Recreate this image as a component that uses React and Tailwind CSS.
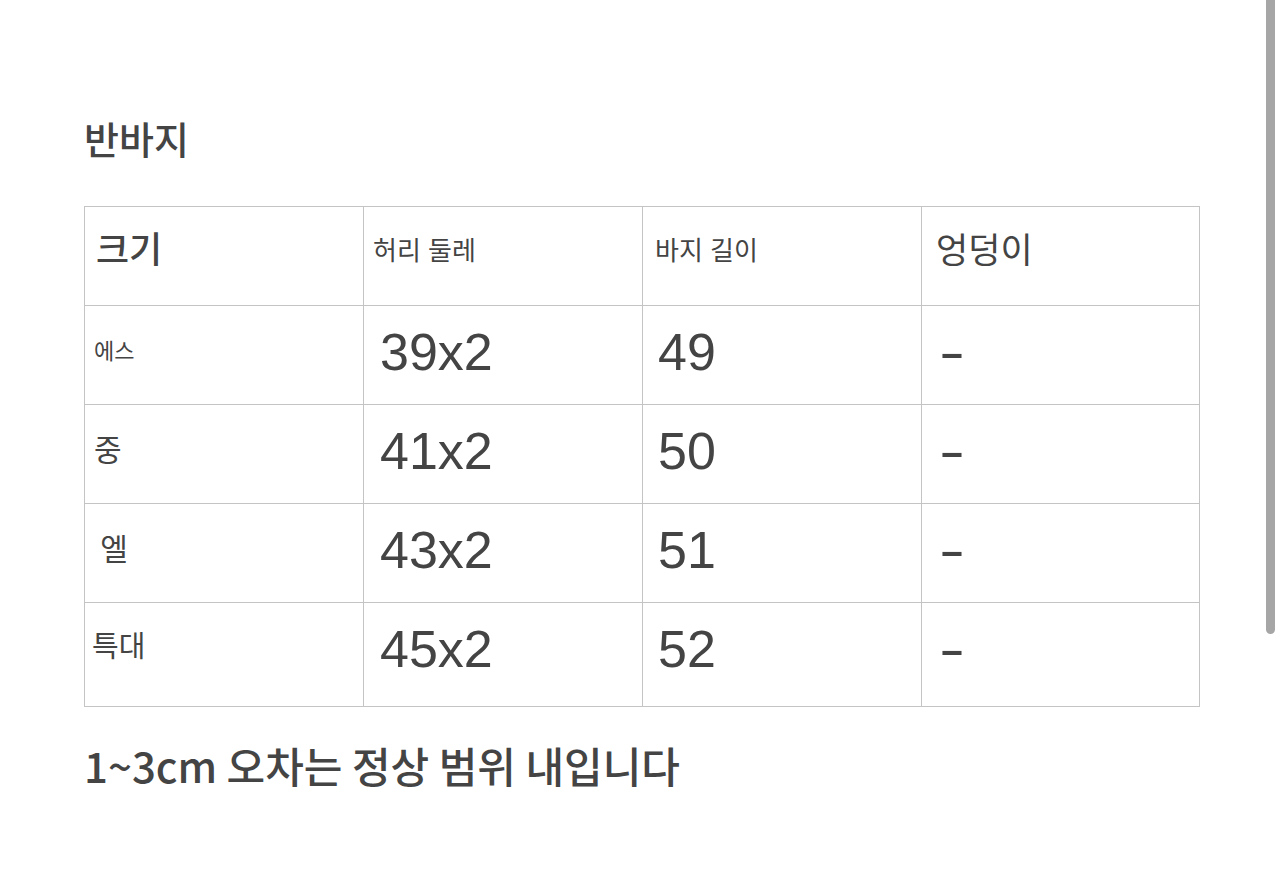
import React from "react";

const font = { fontFamily: '"Liberation Sans", "Noto Sans CJK KR", sans-serif' };
const krFont = { fontFamily: '"Noto Sans CJK KR", "Liberation Sans", sans-serif' };

const rows = [
  { label: "에스", labelCls: "text-[22px] pl-[9px]", w: "39x2", l: "49" },
  { label: "중", labelCls: "text-[30px] pl-[9px]", w: "41x2", l: "50" },
  { label: "\u00a0엘", labelCls: "text-[30px] pl-[7px]", w: "43x2", l: "51" },
  { label: "특대", labelCls: "text-[29px] pl-[7px]", w: "45x2", l: "52" },
];

export default function App() {
  return (
    <div className="relative min-h-[886px] bg-white text-[#444444]" style={font}>
      <div className="pl-[84px] pt-[112px] w-[1200px]">
        <h1 className="text-[38px] font-medium leading-[52px] m-0" style={krFont}>반바지</h1>
        <table className="mt-[42px] w-[1115px] table-fixed border-collapse border border-[#c4c4c4]">
          <colgroup>
            <col className="w-[279px]" />
            <col className="w-[279px]" />
            <col className="w-[279px]" />
            <col className="w-[278px]" />
          </colgroup>
          <tbody>
            <tr className="h-[99px]">
              <td className="border border-[#c4c4c4] pl-[11px] pb-[10px] align-middle text-[36px] font-medium">크기</td>
              <td className="border border-[#c4c4c4] pl-[9px] pb-[10px] align-middle text-[26px]">허리 둘레</td>
              <td className="border border-[#c4c4c4] pl-[12px] pb-[10px] align-middle text-[26px]">바지 길이</td>
              <td className="border border-[#c4c4c4] pl-[14px] pb-[10px] align-middle text-[35px]">엉덩이</td>
            </tr>
            {rows.map((r, i) => {
              const last = i === rows.length - 1;
              return (
                <tr key={i} className={last ? "h-[104px]" : "h-[99px]"}>
                  <td className={`border border-[#c4c4c4] align-middle ${r.labelCls} ${last ? "pb-[14px]" : "pb-[8px]"}`}>{r.label}</td>
                  <td className={`border border-[#c4c4c4] pl-[16px] align-middle text-[52px] ${last ? "pb-[12px]" : "pb-[6px]"}`}>{r.w}</td>
                  <td className={`border border-[#c4c4c4] pl-[15px] align-middle text-[52px] ${last ? "pb-[12px]" : "pb-[6px]"}`}>{r.l}</td>
                  <td className={`border border-[#c4c4c4] pl-[17px] align-middle text-[52px] ${last ? "pb-[12px]" : "pb-[6px]"}`}>
                    <span className="inline-block scale-x-150 origin-left">-</span>
                  </td>
                </tr>
              );
            })}
          </tbody>
        </table>
        <p className="mt-[30px] text-[42px] font-medium leading-[56px] m-0" style={krFont}>1~3cm 오차는 정상 범위 내입니다</p>
      </div>
      <div className="absolute right-[9px] top-0 h-[634px] w-[9px] rounded-b-full bg-[#a6a6a6]" />
    </div>
  );
}
